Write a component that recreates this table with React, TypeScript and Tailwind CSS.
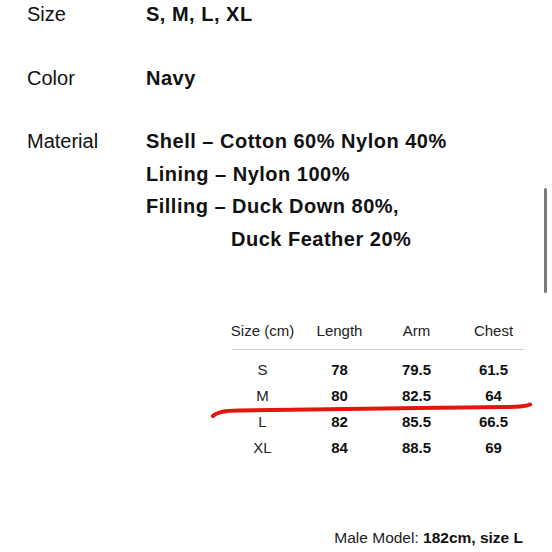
const rows = [
  { size: 'S', length: '78', arm: '79.5', chest: '61.5' },
  { size: 'M', length: '80', arm: '82.5', chest: '64' },
  { size: 'L', length: '82', arm: '85.5', chest: '66.5' },
  { size: 'XL', length: '84', arm: '88.5', chest: '69' },
];

export default function App() {
  return (
    <div
      className="relative w-[552px] h-[552px] overflow-hidden bg-white text-[#111]"
      style={{ fontFamily: '"Liberation Sans", Arial, sans-serif' }}
    >
      {/* Spec list */}
      <div className="pl-[27px] -mt-[2px] text-[20px] leading-[32px]">
        <div className="flex">
          <div className="w-[119px]">Size</div>
          <div className="font-bold tracking-[0.5px]">S, M, L, XL</div>
        </div>
        <div className="flex mt-[32px]">
          <div className="w-[119px]">Color</div>
          <div className="font-bold tracking-[0.5px]">Navy</div>
        </div>
        <div className="flex mt-[31px]">
          <div className="w-[119px]">Material</div>
          <div className="font-bold leading-[32.5px] tracking-[0.5px]">
            <div>Shell – Cotton 60% Nylon 40%</div>
            <div>Lining – Nylon 100%</div>
            <div>Filling – Duck Down 80%,</div>
            <div className="pl-[85px]">Duck Feather 20%</div>
          </div>
        </div>
      </div>

      {/* Size table */}
      <div className="ml-[224px] mt-[65.5px] w-[308px] text-[15px]">
        <div className="grid grid-cols-4 leading-[20px] text-[#222] pb-[8px]">
          <div className="text-center">Size (cm)</div>
          <div className="text-center">Length</div>
          <div className="text-center">Arm</div>
          <div className="text-center">Chest</div>
        </div>
        <div className="mx-[8px] h-px bg-[#cfcfcf]" />
        <div className="pt-[7px]">
          {rows.map((r) => (
            <div key={r.size} className="grid grid-cols-4 leading-[26px]">
              <div className="text-center text-[#222]">{r.size}</div>
              <div className="text-center font-bold">{r.length}</div>
              <div className="text-center font-bold">{r.arm}</div>
              <div className="text-center font-bold">{r.chest}</div>
            </div>
          ))}
        </div>
      </div>

      {/* Footer note */}
      <div className="mt-[67px] pr-[29px] text-right text-[15.5px] leading-[20px] text-[#222]">
        Male Model: <span className="font-bold text-[#111]">182cm, size L</span>
      </div>

      {/* Red marker stroke */}
      <svg className="absolute left-0 top-0 pointer-events-none" width="552" height="552">
        <path
          d="M213 416 C217 412, 224 410.5, 238 410.5 L420 408 L505 407 C518 407, 526 406.5, 530 404.5"
          fill="none"
          stroke="#e5140c"
          strokeWidth="4"
          strokeLinecap="round"
          strokeLinejoin="round"
        />
      </svg>

      {/* Scrollbar */}
      <div className="absolute left-[544px] top-[188px] w-[3px] h-[105px] rounded-full bg-[#7a7a7a]" />
    </div>
  );
}
